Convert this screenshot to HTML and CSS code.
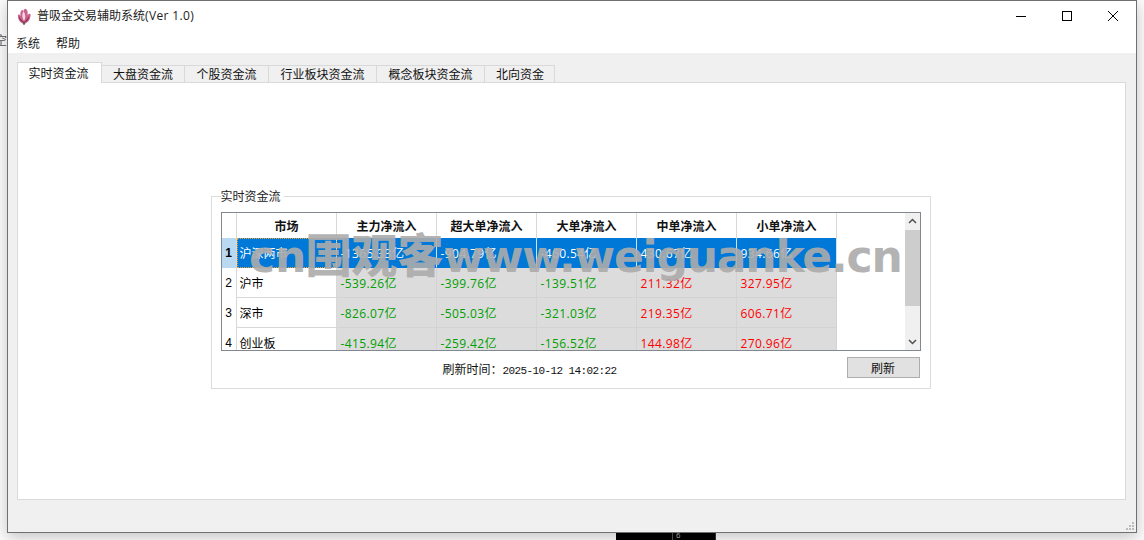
FILE: index.html
```html
<!DOCTYPE html>
<html lang="zh-CN">
<head>
<meta charset="utf-8">
<title>普吸金交易辅助系统</title>
<link rel="stylesheet" href="styles.css">
</head>
<body>
<div class="desktop">
  <span class="peek">空</span>
  <div class="behind"><span class="behind-num">6</span></div>
  <div class="window">
    <header class="titlebar">
      <svg class="app-icon" width="14" height="17" viewBox="0 0 14 17">
        <path d="M7 16C3 15 .5 11 1 7c1-1 2 0 2.500 1C3 5 3.500 3 5 2c.5 0 1 .5 1.500 1C7 1.500 8 .5 9 1c1.500 1 2 3 1.500 6 1-1 2-1.500 3-1 .5 4-2 9-6.500 10z" fill="#c9628c"/>
        <path d="M7 13C5 10 4.500 6 6.500 3c2 3 2.500 7 .5 10z" fill="#f6d5e0"/>
        <path d="M2 8c1 3 3 5 5 6-3 0-5-2.500-5-6zM12 8c0 3-2 6-5 6 2-1.500 4-3.500 5-6z" fill="#7c2347"/>
        <path d="M6 14h2l-.5 3h-1z" fill="#4d5a33"/>
      </svg>
      <span class="title">普吸金交易辅助系统<span class="title-ver">(Ver 1.0)</span></span>
      <div class="controls">
        <svg width="46" height="30" viewBox="0 0 46 30"><path d="M18 15.500h10" stroke="#000" fill="none"/></svg>
        <svg width="46" height="30" viewBox="0 0 46 30"><rect x="18.500" y="10.500" width="9" height="9" stroke="#000" fill="none"/></svg>
        <svg width="46" height="30" viewBox="0 0 46 30"><path d="M18 10l10 10M28 10l-10 10" stroke="#000" fill="none"/></svg>
      </div>
    </header>
    <nav class="menubar"><span>系统</span><span>帮助</span></nav>
    <main class="client">
      <div class="tabs">
        <span class="tab active">实时资金流</span>
        <span class="tab w83">大盘资金流</span>
        <span class="tab">个股资金流</span>
        <span class="tab w108">行业板块资金流</span>
        <span class="tab w108">概念板块资金流</span>
        <span class="tab w70">北向资金</span>
      </div>
      <section class="pane">
        <fieldset class="group">
          <legend>实时资金流</legend>
          <div class="grid-frame">
            <div class="grid-clip">
              <table class="grid">
                <colgroup>
                  <col class="c-idx"><col class="c-data"><col class="c-data"><col class="c-data"><col class="c-data"><col class="c-data"><col class="c-data">
                </colgroup>
                <thead>
                  <tr><th></th><th>市场</th><th>主力净流入</th><th>超大单净流入</th><th>大单净流入</th><th>中单净流入</th><th>小单净流入</th></tr>
                </thead>
                <tbody>
                  <tr class="sel"><th>1</th><td class="name"><span class="focus">沪深两市</span></td><td>-1365.33亿</td><td>-904.79亿</td><td>-460.54亿</td><td>430.67亿</td><td>934.66亿</td></tr>
                  <tr><th>2</th><td class="name">沪市</td><td class="g">-539.26亿</td><td class="g">-399.76亿</td><td class="g">-139.51亿</td><td class="r">211.32亿</td><td class="r">327.95亿</td></tr>
                  <tr><th>3</th><td class="name">深市</td><td class="g">-826.07亿</td><td class="g">-505.03亿</td><td class="g">-321.03亿</td><td class="r">219.35亿</td><td class="r">606.71亿</td></tr>
                  <tr><th>4</th><td class="name">创业板</td><td class="g">-415.94亿</td><td class="g">-259.42亿</td><td class="g">-156.52亿</td><td class="r">144.98亿</td><td class="r">270.96亿</td></tr>
                </tbody>
              </table>
            </div>
            <div class="scrollbar">
              <svg class="arrow" width="15" height="17" viewBox="0 0 15 17"><path d="M4 10l3.500-3.500L11 10" stroke="#505050" stroke-width="1.500" fill="none"/></svg>
              <div class="thumb-track"><div class="thumb"></div></div>
              <svg class="arrow" width="15" height="17" viewBox="0 0 15 17"><path d="M4 7l3.500 3.500L11 7" stroke="#505050" stroke-width="1.500" fill="none"/></svg>
            </div>
          </div>
          <div class="footer">
            <span class="stamp">刷新时间：<span class="mono">2025-10-12 14:02:22</span></span>
            <button class="refresh">刷新</button>
          </div>
        </fieldset>
      </section>
      <svg class="grip" width="10" height="10" viewBox="0 0 10 10"><path d="M7 1h2v2H7zM4 4h2v2H4zM7 4h2v2H7zM1 7h2v2H1zM4 7h2v2H4zM7 7h2v2H7z" fill="#bcbcbc"/></svg>
    </main>
    <div class="watermark">cn<span class="wm-cjk">围观客</span><span class="wm-url">www.weiguanke.cn</span></div>
  </div>
</div>
</body>
</html>
```
FILE: styles.css
```css
* { box-sizing: border-box; }
html, body { margin: 0; padding: 0; }
body {
  width: 1144px;
  height: 540px;
  overflow: hidden;
  background: #fff;
  font-family: "Noto Sans CJK SC", "Liberation Sans", sans-serif;
  font-size: 12px;
  color: #000;
}
.desktop { position: relative; width: 1144px; height: 540px; overflow: hidden; background: #fbfbfb; }
.peek { position: absolute; left: -5px; top: 32px; color: #555; font-size: 12px; line-height: 16px; }
.behind { position: absolute; left: 616px; top: 528px; width: 100px; height: 12px; background: #000; border-right: 1px solid #333; }
.behind-num { position: absolute; left: 56px; top: 3px; padding-left: 3px; border-left: 1px solid #555; color: #aaa; font: 8px/10px "Liberation Sans", sans-serif; }

.window {
  position: absolute;
  left: 7px;
  top: 0;
  width: 1130px;
  height: 533px;
  display: flex;
  flex-direction: column;
  background: #f0f0f0;
  border: 1px solid #707070;
  box-shadow: 0 4px 14px rgba(0, 0, 0, .22);
}
.titlebar { position: relative; height: 32px; flex: none; display: flex; align-items: center; background: #fff; padding-left: 9px; }
.app-icon { flex: none; margin-right: 6px; margin-top: -2px; }
.title { font-family: "Open Sans", "Noto Sans CJK SC", sans-serif; font-size: 12px; color: #222; line-height: 16px; margin-top: -2px; }
.title-ver { letter-spacing: .35px; }
.controls { margin-left: auto; display: flex; margin-top: -2px; }
.menubar { height: 20px; flex: none; display: flex; align-items: center; gap: 16px; padding-left: 8px; background: #fff; line-height: 16px; color: #222; }

.client { position: relative; flex: 1; display: flex; flex-direction: column; padding: 9px 10px 32px 9px; background: #f0f0f0; }
.tabs { display: flex; align-items: flex-end; height: 20px; flex: none; position: relative; z-index: 1; }
.tab {
  width: 84px;
  height: 17px;
  display: flex;
  align-items: center;
  justify-content: center;
  background: #f0f0f0;
  border: 1px solid #d9d9d9;
  border-left: 0;
  border-bottom: 0;
  line-height: 16px;
  color: #111;
}
.tab.active { width: 85px; height: 21px; margin-bottom: -1px; padding-right: 2px; background: #fff; border: 1px solid #d9d9d9; border-bottom: 0; }
.w83 { width: 83px; }
.w108 { width: 108px; }
.w70 { width: 70px; padding-left: 1px; }
.pane { flex: 1; background: #fff; border: 1px solid #d9d9d9; display: flex; align-items: flex-start; justify-content: center; padding: 105px 0 0 0; }

.group { margin: 0 0 0 -2px; padding: 0 9px; width: 720px; height: 201px; border: 1px solid #dcdcdc; min-inline-size: 0; display: flex; flex-direction: column; }
legend { padding: 0 3px 0 0; margin-left: 0; font-size: 12px; line-height: 16px; color: #222; }
.grid-frame { width: 700px; height: 139px; margin-top: 8px; display: flex; border: 1px solid #828790; background: #fff; flex: none; }
.grid-clip { width: 682px; height: 137px; overflow: hidden; flex: none; }
.grid { table-layout: fixed; width: 615px; border-collapse: separate; border-spacing: 0; }
.c-idx { width: 15px; }
.c-data { width: 100px; }
.grid thead th {
  height: 25px;
  font-weight: 700;
  font-size: 12px;
  background: #fff;
  border-right: 1px solid #d8d8d8;
  padding: 0 0 0 1px;
  color: #111;
}
.grid tbody th {
  height: 30px;
  padding: 0;
  font-weight: 400;
  font-size: 12px;
  background: #fff;
  border-right: 1px solid #d8d8d8;
  font-family: "Liberation Sans", sans-serif;
}
.grid td {
  height: 30px;
  padding: 0 0 0 4px;
  font-size: 12px;
  letter-spacing: .4px;
  white-space: nowrap;
  overflow: hidden;
  background: #dcdcdc;
  border-right: 1px solid #d3d3d3;
  border-bottom: 1px solid #d3d3d3;
  font-family: "Open Sans", "Noto Sans CJK SC", sans-serif;
}
.grid td.name { padding-left: 3px; letter-spacing: 0; background: #fff; border-right-color: #d8d8d8; border-bottom-color: #d8d8d8; font-family: "Noto Sans CJK SC", sans-serif; }
.g { color: #00a000; }
.r { color: #ff0000; }
.grid tr.sel th { background: #b9d9f2; font-weight: 700; }
.grid tr.sel td, .grid tr.sel td.name { background: #0078d7; color: #fff; border-color: #cfe3f5; border-bottom-color: #0078d7; }
.grid tr.sel td.name { position: relative; outline: 1px dotted #f0a030; outline-offset: -1px; }
.scrollbar { width: 15px; margin-left: auto; flex: none; display: flex; flex-direction: column; background: #f0f0f0; }
.arrow { flex: none; }
.thumb-track { flex: 1; }
.thumb { height: 76px; background: #cdcdcd; }

.footer { position: relative; flex: 1; display: flex; align-items: flex-start; padding: 8px 0 0 222px; }
.stamp { line-height: 20px; color: #111; }
.mono { font-family: "Liberation Mono", monospace; font-size: 11px; letter-spacing: -.6px; }
.refresh {
  position: absolute;
  right: 1px;
  top: 6px;
  width: 73px;
  height: 21px;
  padding: 0;
  background: #e1e1e1;
  border: 1px solid #adadad;
  font: 12px/16px "Noto Sans CJK SC", sans-serif;
  color: #111;
}
.grip { position: absolute; right: 1px; bottom: 1px; }

.watermark {
  position: absolute;
  left: 241px;
  top: 223px;
  white-space: nowrap;
  font-family: "DejaVu Sans", "Noto Sans CJK SC", sans-serif;
  font-weight: 700;
  font-size: 44px;
  line-height: 56px;
  color: rgba(172, 172, 172, .92);
  pointer-events: none;
}
.wm-cjk { font-size: 46px; margin-left: -1px; font-family: "Noto Sans CJK SC", sans-serif; font-weight: 900; }
.wm-url { letter-spacing: -1.2px; }
```
